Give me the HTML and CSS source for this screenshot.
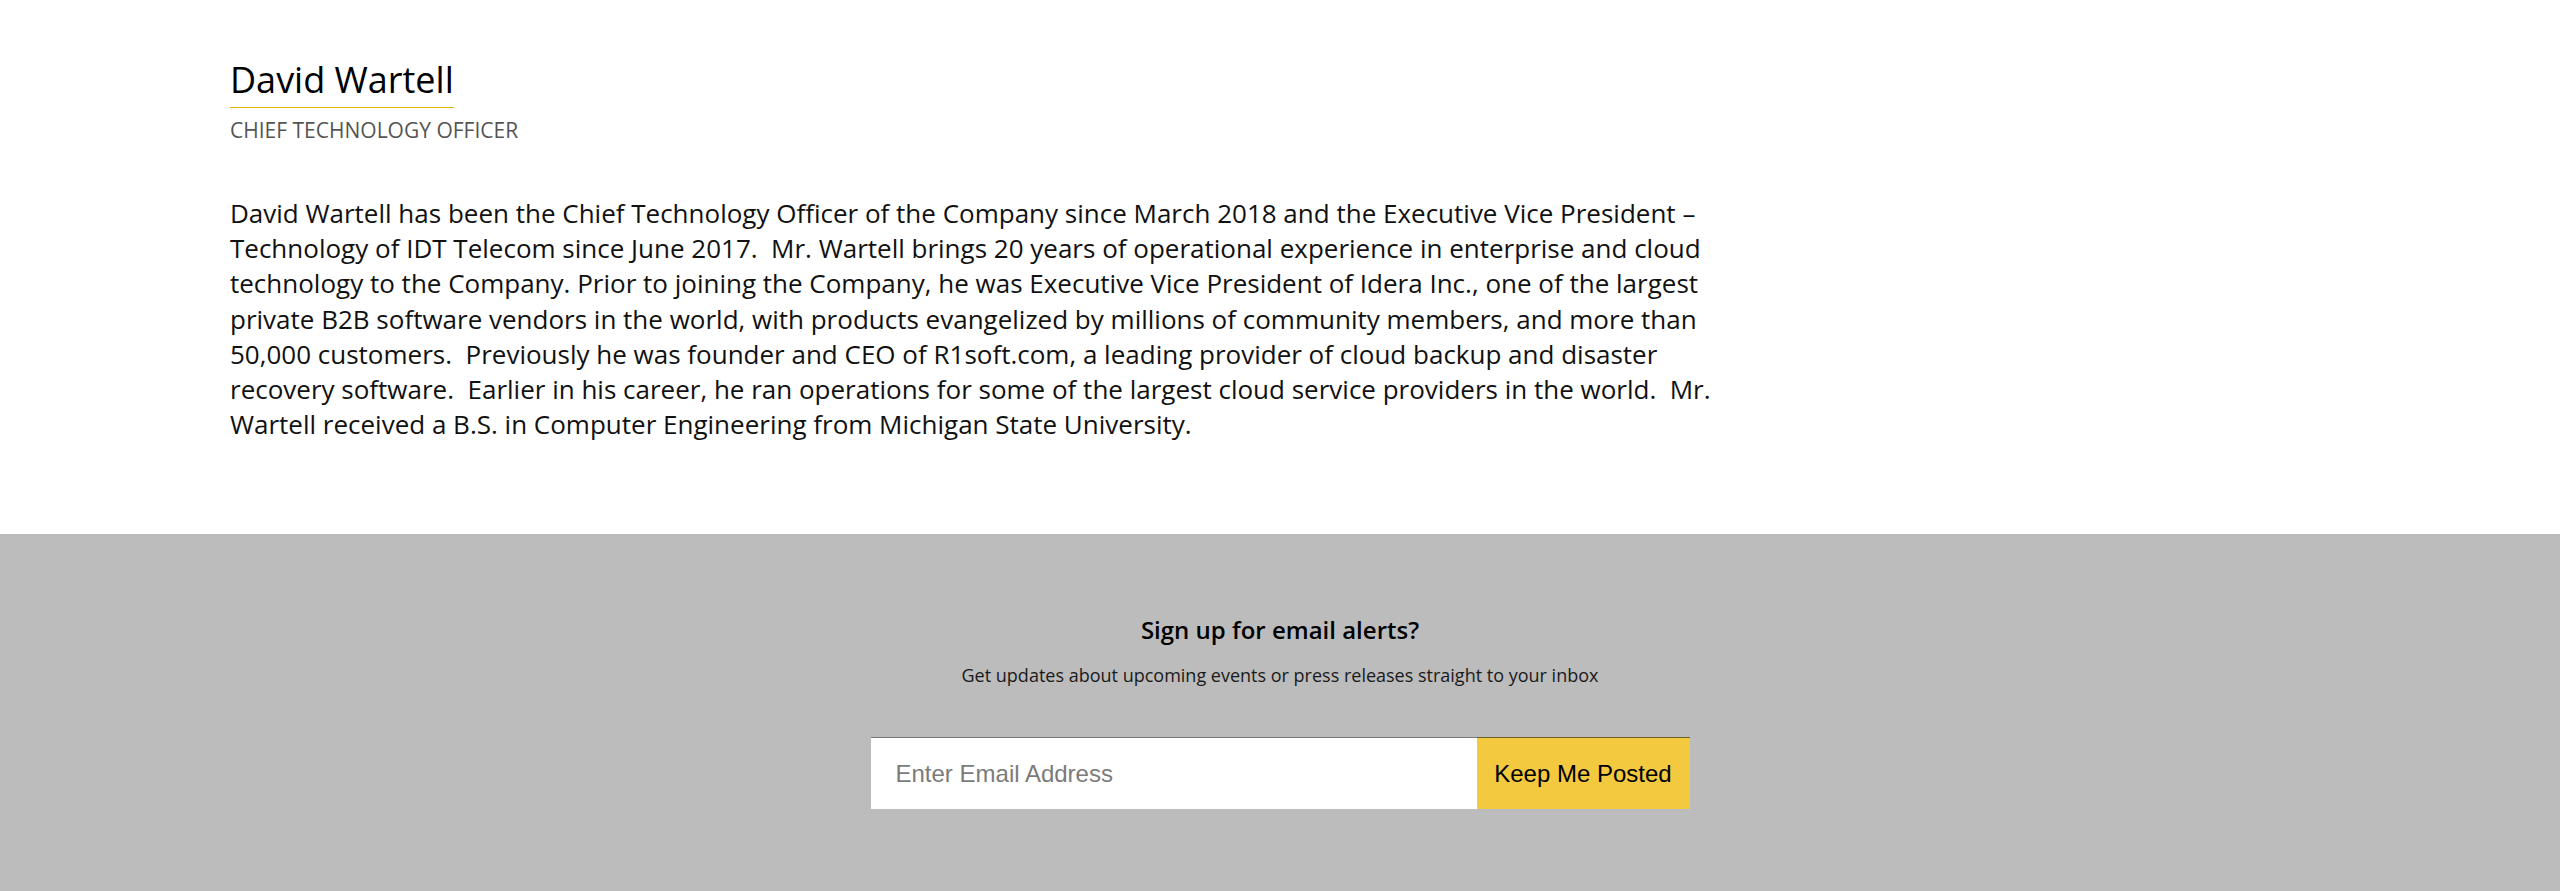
FILE: index.html
```html
<!DOCTYPE html>
<html lang="en">
<head>
<meta charset="utf-8">
<title>David Wartell</title>
<link rel="stylesheet" href="styles.css">
</head>
<body>
<main class="bio">
  <header class="bio-head">
    <h1 class="bio-name">David Wartell</h1>
    <p class="bio-title">CHIEF TECHNOLOGY OFFICER</p>
  </header>
  <p class="bio-text">David Wartell has been the Chief Technology Officer of the Company since March 2018 and the Executive Vice President – Technology of IDT Telecom since June 2017.&nbsp; Mr. Wartell brings 20 years of operational experience in enterprise and cloud technology to the Company. Prior to joining the Company, he was Executive Vice President of Idera Inc., one of the largest private B2B software vendors in the world, with products evangelized by millions of community members, and more than 50,000 customers.&nbsp; Previously he was founder and CEO of R1soft.com, a leading provider of cloud backup and disaster recovery software.&nbsp; Earlier in his career, he ran operations for some of the largest cloud service providers in the world.&nbsp; Mr. Wartell received a B.S. in Computer Engineering from Michigan State University.</p>
</main>
<footer class="alerts">
  <h2 class="alerts-title">Sign up for email alerts?</h2>
  <p class="alerts-sub">Get updates about upcoming events or press releases straight to your inbox</p>
  <form class="alerts-form">
    <input class="alerts-input" type="email" placeholder="Enter Email Address">
    <button class="alerts-btn" type="button">Keep Me Posted</button>
  </form>
</footer>
</body>
</html>
```
FILE: styles.css
```css
* { box-sizing: border-box; }
html, body { margin: 0; padding: 0; background: #fff; }
body { font-family: "Open Sans", "Liberation Sans", sans-serif; color: #000; }

.bio {
  padding: 58px 0 92px 230px;
}
.bio-head { display: flex; flex-direction: column; align-items: flex-start; }
.bio-name {
  margin: 0;
  font-size: 36px;
  font-weight: 400;
  line-height: 43px;
  padding-bottom: 6px;
  border-bottom: 1px solid #e2b100;
  color: #000;
}
.bio-title {
  margin: 7px 0 0;
  font-size: 21px;
  line-height: 30px;
  color: #555;
}
.bio-text {
  margin: 51px 0 0;
  width: 1500px;
  font-size: 26px;
  line-height: 35.2px;
  color: #111;
}

.alerts {
  background: #bcbcbc;
  padding: 80px 0 82px;
  display: flex;
  flex-direction: column;
  align-items: center;
}
.alerts-title {
  margin: 0;
  font-size: 24px;
  font-weight: 600;
  line-height: 32px;
  color: #000;
}
.alerts-sub {
  margin: 17px 0 0;
  font-size: 18px;
  line-height: 24px;
  color: #1a1a1a;
}
.alerts-form {
  margin-top: 50px;
  display: flex;
  height: 72px;
}
.alerts-input {
  width: 606px;
  height: 100%;
  border: 0;
  border-top: 1px solid #7a7a7a;
  background: #fff;
  padding: 0 0 0 25px;
  font-family: "Liberation Sans", Arial, sans-serif;
  font-size: 24px;
  color: #333;
  outline: none;
}
.alerts-input::placeholder { color: #7b7b7b; }
.alerts-btn {
  width: 213px;
  height: 100%;
  border: 0;
  border-top: 1px solid #6d5f2c;
  background: #f3c93f;
  font-family: "Liberation Sans", Arial, sans-serif;
  font-size: 24px;
  color: #000;
  padding: 0;
  cursor: pointer;
}
```
